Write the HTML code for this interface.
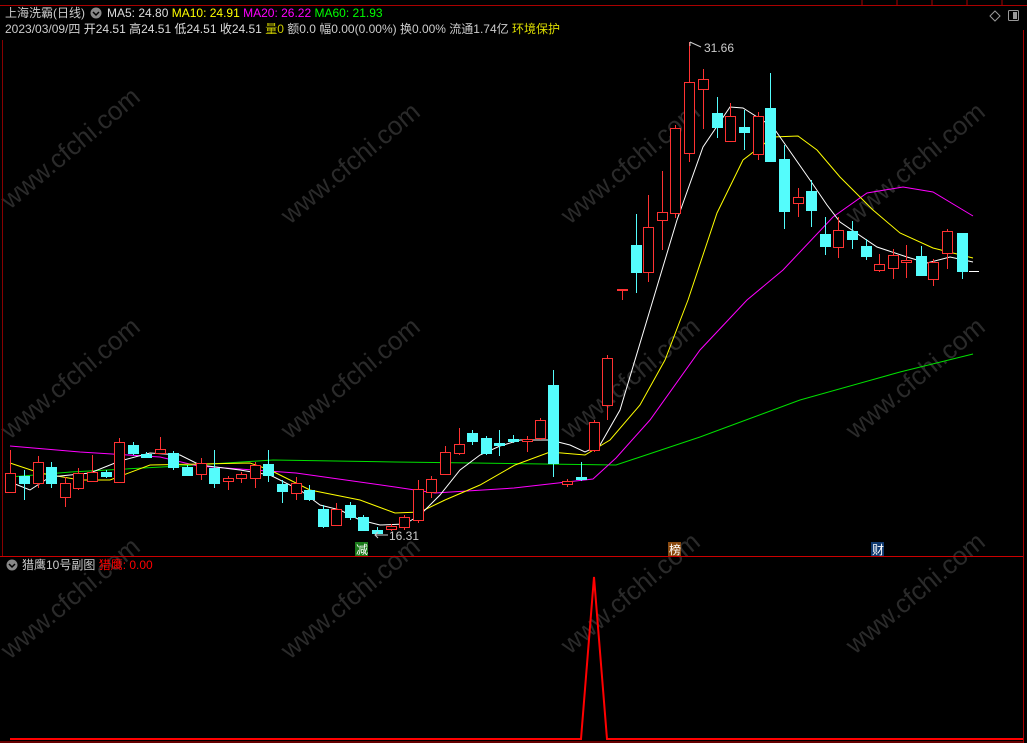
<!DOCTYPE html>
<html><head><meta charset="utf-8"><style>
html,body{margin:0;padding:0;background:#000;width:1027px;height:743px;overflow:hidden}
svg{position:absolute;left:0;top:0}
.t{font-family:"Liberation Sans","Noto Sans CJK SC",sans-serif;font-size:12px}
</style></head><body>
<svg id="s" width="1027" height="743" xmlns="http://www.w3.org/2000/svg">
<rect width="1027" height="743" fill="#000"/>
<g id="wm" fill="#2a2a2a" font-family="Liberation Sans,sans-serif" font-size="26">
<text transform="translate(10,210) rotate(-40)">www.cfchi.com</text>
<text transform="translate(290,225) rotate(-40)">www.cfchi.com</text>
<text transform="translate(570,225) rotate(-40)">www.cfchi.com</text>
<text transform="translate(855,225) rotate(-40)">www.cfchi.com</text>
<text transform="translate(10,440) rotate(-40)">www.cfchi.com</text>
<text transform="translate(290,440) rotate(-40)">www.cfchi.com</text>
<text transform="translate(570,440) rotate(-40)">www.cfchi.com</text>
<text transform="translate(855,440) rotate(-40)">www.cfchi.com</text>
<text transform="translate(10,660) rotate(-40)">www.cfchi.com</text>
<text transform="translate(290,660) rotate(-40)">www.cfchi.com</text>
<text transform="translate(570,655) rotate(-40)">www.cfchi.com</text>
<text transform="translate(855,655) rotate(-40)">www.cfchi.com</text>
</g>
<!-- top strip -->
<line x1="0" y1="5.5" x2="1027" y2="5.5" stroke="#a00" stroke-width="1"/>
<g stroke="#a00"><line x1="862" y1="0" x2="862" y2="5"/><line x1="897" y1="0" x2="897" y2="5"/><line x1="932" y1="0" x2="932" y2="5"/><line x1="967" y1="0" x2="967" y2="5"/><line x1="1002" y1="0" x2="1002" y2="5"/></g>
<!-- borders -->
<line x1="1023.5" y1="30" x2="1023.5" y2="743" stroke="#a00"/>
<line x1="0" y1="556.5" x2="1023" y2="556.5" stroke="#c00"/>
<line x1="0" y1="742" x2="1023" y2="742" stroke="#c00"/>
<line x1="2.5" y1="40" x2="2.5" y2="556" stroke="#800"/>
<path d="M995 11 L1000 16 L995 21 L990 16Z" fill="none" stroke="#999"/>
<rect x="1008.5" y="10.5" width="10" height="10" rx="1" fill="none" stroke="#999"/><rect x="1013" y="12" width="4" height="7" fill="#999"/>
<g id="ma" fill="none" stroke-width="1"></g>
<g id="cd"></g>
<!-- subplot -->
<polyline points="10,739 581,739 594,577 607,739 1023,739" fill="none" stroke="#f00" stroke-width="2"/>
<!-- markers -->
<rect x="355" y="542" width="13" height="14" fill="#1a7a1a"/><text x="356" y="554" class="t" fill="#fff" font-size="12">减</text>
<rect x="668" y="542" width="13" height="14" fill="#8a4a10"/><text x="669" y="554" class="t" fill="#fff" font-size="12">榜</text>
<rect x="871" y="542" width="13" height="14" fill="#103a70"/><text x="872" y="554" class="t" fill="#fff" font-size="12">财</text>
<text x="389" y="540" class="t" fill="#ccc">16.31</text>
<path d="M375 535 L388 535 M378 532 L375 535 L378 538" stroke="#ccc" fill="none"/>
<text x="704" y="52" class="t" fill="#ccc">31.66</text>
<path d="M690 42 L701 47 M690 42 L690 46" stroke="#ccc" fill="none"/>
<!-- header text -->
<text x="5" y="17" class="t" fill="#ccc">上海洗霸(日线)</text>
<circle cx="96" cy="13" r="5.5" fill="#888"/><path d="M93 12 L96 15 L99 12" stroke="#000" fill="none" stroke-width="1.5"/>
<text x="107" y="17" class="t"><tspan fill="#ddd">MA5: 24.80 </tspan><tspan fill="#ff0">MA10: 24.91 </tspan><tspan fill="#f0f">MA20: 26.22 </tspan><tspan fill="#0f0">MA60: 21.93</tspan></text>
<text x="5" y="33" class="t" fill="#ccc">2023/03/09/四 <tspan fill="#ddd">开24.51 高24.51 低24.51 收24.51 </tspan><tspan fill="#cc0">量0 </tspan><tspan>额0.0 幅0.00(0.00%) 换0.00% 流通1.74亿 </tspan><tspan fill="#dd0">环境保护</tspan></text>
<circle cx="12" cy="565" r="5.5" fill="#888"/><path d="M9 564 L12 567 L15 564" stroke="#000" fill="none" stroke-width="1.5"/>
<text x="22" y="569" class="t" fill="#ccc">猎鹰10号副图 <tspan fill="#f00">猎鹰</tspan><tspan fill="#f00">: 0.00</tspan></text>
</svg>
<script>
var C=[
[10,'r',473,492,450,492],[24,'c',476,483,470,500],[38,'r',462,483,456,488],[51,'c',467,483,462,488],[65,'r',483,497,477,507],[78,'r',473,488,468,490],[92,'r',472,481,455,482],[106,'c',472,476,470,478],[119,'r',442,482,438,482],[133,'c',445,453,442,455],[146,'c',454,457,452,458],[160,'r',449,453,437,453],[173,'c',453,467,451,470],[187,'c',467,475,465,476],[201,'r',463,474,458,480],[214,'c',468,483,450,488],[228,'r',478,481,476,490],[241,'r',474,478,472,483],[255,'r',465,478,462,488],[268,'c',464,475,450,482],[282,'c',484,491,480,503],[296,'r',483,493,477,500],[309,'c',490,499,485,501],[323,'c',509,526,505,528],[336,'r',509,525,503,525],[350,'c',505,517,502,520],[363,'c',517,530,515,531],[377,'c',530,533,527,534],[391,'r',526,529,524,531],[404,'r',517,527,515,530],[418,'r',489,520,480,523],[431,'r',479,492,476,498],[445,'r',452,474,446,474],[459,'r',444,453,428,455],[472,'c',433,441,430,445],[486,'c',438,453,436,455],[499,'c',443,445,430,456],[513,'c',439,441,435,443],[527,'r',439,441,436,452],[540,'r',420,438,418,440],[553,'c',385,463,370,477],[567,'r',481,484,479,487],[581,'c',477,479,462,481],[594,'r',422,450,420,452],[607,'r',358,405,355,420],
[622,'r',289,290,289,300],[636,'c',245,272,214,293],[648,'r',227,272,195,282],[662,'r',212,220,171,250],[675,'r',128,213,125,218],[689,'r',82,153,42,162],[703,'r',79,89,69,129],[717,'c',113,127,97,138],[730,'r',116,141,103,141],[744,'c',127,132,110,150],[758,'r',116,154,112,160],[770,'c',108,161,73,161],[784,'c',159,211,145,229],[798,'r',197,203,188,217],[811,'c',191,210,180,227],[825,'c',234,246,217,255],[838,'r',230,247,217,258],[852,'c',231,239,221,249],[866,'c',246,256,239,260],[879,'r',264,270,254,272],[893,'r',255,268,249,279],[906,'r',260,262,245,278],[921,'c',256,275,246,276],[933,'r',262,279,259,286],[947,'r',231,253,229,269],[962,'c',233,271,233,279]];
var h='';
C.forEach(function(c){var x=c[0],r=c[1]=='r',col=r?'#ff3232':'#54fcfc';
h+='<line x1="'+(x+.5)+'" y1="'+c[4]+'" x2="'+(x+.5)+'" y2="'+c[5]+'" stroke="'+col+'"/>';
var hh=Math.max(1,c[3]-c[2]);
if(r)h+='<rect x="'+(x-4.5)+'" y="'+(c[2]+.5)+'" width="10" height="'+hh+'" fill="#000" stroke="'+col+'"/>';
else h+='<rect x="'+(x-5)+'" y="'+c[2]+'" width="11" height="'+(hh+1)+'" fill="'+col+'"/>';});
h+='<line x1="969" y1="271.5" x2="979" y2="271.5" stroke="#fff"/>';
document.getElementById('cd').innerHTML=h;
var M={
'#00e000':'10,477 71,472 180,466 273,460 395,462 474,463 616,465 700,437 800,400 900,372 973,354',
'#ff00ff':'10,446 80,452 160,457 198,466 296,473 395,487 435,493 514,488 593,479 616,458 650,420 700,350 747,300 783,270 833,217 867,193 903,187 933,192 973,216',
'#ffff00':'10,463 40,473 80,480 110,480 150,465 200,464 250,463 270,470 310,490 360,500 395,513 420,512 445,500 480,485 515,465 550,452 585,455 610,440 640,405 665,360 688,300 717,213 743,160 773,137 798,136 817,150 840,177 873,210 900,233 933,248 973,258',
'#ffffff':'10,482 30,490 50,477 90,473 120,461 150,453 180,455 200,465 240,470 270,475 300,490 320,505 340,510 360,520 380,525 405,524 420,515 440,495 460,470 480,455 500,446 520,440 550,440 570,445 585,452 600,445 620,410 653,300 677,220 703,147 730,107 743,108 773,127 787,147 810,180 827,205 840,222 877,247 907,257 927,263 950,257 973,262'};
var m='';for(var k in M)m+='<polyline points="'+M[k]+'" stroke="'+k+'"/>';
document.getElementById('ma').innerHTML=m;
</script>
</body></html>
